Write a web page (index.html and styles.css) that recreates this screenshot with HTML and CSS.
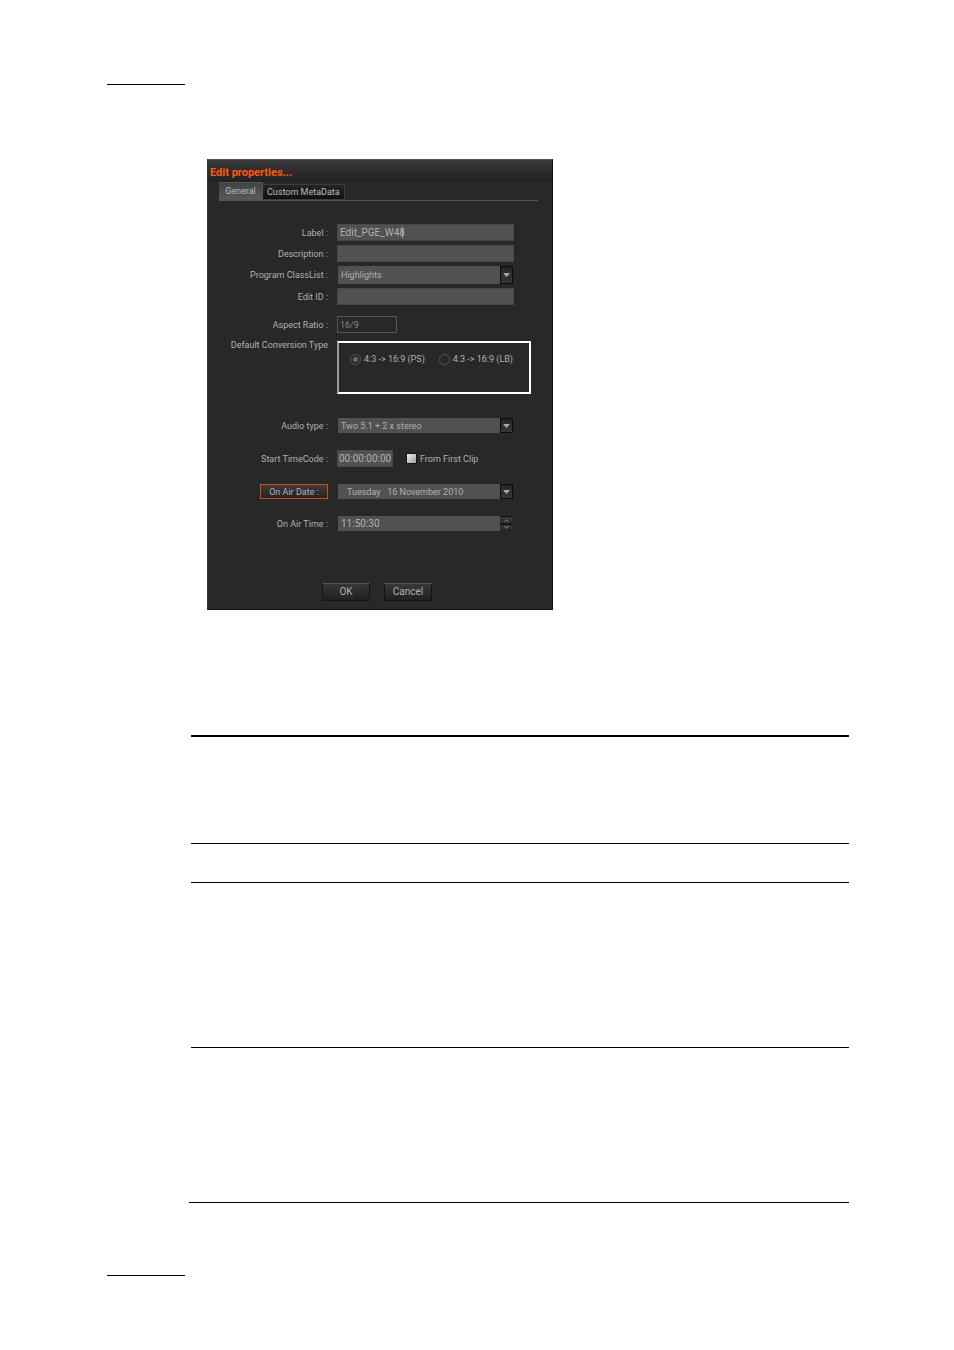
FILE: index.html
```html
<!DOCTYPE html>
<html lang="en">
<head>
    <meta charset="UTF-8">
    <meta name="viewport" content="width=device-width, initial-scale=1.0">
    <title>Edit properties</title>
    <link rel="stylesheet" href="styles.css">
</head>
<body>
    <hr class="mark">

    <main class="content">
        <form class="dialog" onsubmit="return false">
            <h1 class="title">Edit properties...</h1>

            <div class="tabs">
                <button type="button" class="tab active">General</button>
                <button type="button" class="tab">Custom MetaData</button>
            </div>

            <div class="fields">
                <div class="row">
                    <label for="label">Label :</label>
                    <div class="control">
                        <input class="box large" id="label" type="text" value="Edit_PGE_W48">
                        <span class="caret"></span>
                    </div>
                </div>
                <div class="row">
                    <label for="description">Description :</label>
                    <input class="box" id="description" type="text">
                </div>
                <div class="row">
                    <label for="classlist">Program ClassList :</label>
                    <div class="control combo tall">
                        <select id="classlist">
                            <option>Highlights</option>
                        </select>
                        <span class="arrow"><svg viewBox="0 0 7 4"><path d="M0 0h7L3.500 4z"/></svg></span>
                    </div>
                </div>
                <div class="row">
                    <label for="edit-id">Edit ID :</label>
                    <input class="box" id="edit-id" type="text">
                </div>
                <div class="row ratio">
                    <label for="ratio">Aspect Ratio :</label>
                    <input class="box outline" id="ratio" type="text" value="16/9" readonly>
                </div>
                <div class="row conversion">
                    <span class="name" id="conversion">Default Conversion Type</span>
                    <div class="group" role="radiogroup" aria-labelledby="conversion">
                        <label><input type="radio" name="conversion" checked>4:3 -&gt; 16:9 (PS)</label>
                        <label><input type="radio" name="conversion">4:3 -&gt; 16:9 (LB)</label>
                    </div>
                </div>
                <div class="row audio">
                    <label for="audio">Audio type :</label>
                    <div class="control combo">
                        <select id="audio">
                            <option>Two 5.1 + 2 x stereo</option>
                        </select>
                        <span class="arrow"><svg viewBox="0 0 7 4"><path d="M0 0h7L3.500 4z"/></svg></span>
                    </div>
                </div>
                <div class="row spaced">
                    <label for="timecode">Start TimeCode :</label>
                    <input class="box large timecode" id="timecode" type="text" value="00:00:00:00">
                    <label class="check"><input type="checkbox">From First Clip</label>
                </div>
                <div class="row spaced">
                    <div class="name"><button type="button" class="date-button" id="date-name">On Air Date :</button></div>
                    <div class="control combo">
                        <input class="date" type="text" value="Tuesday   16 November 2010" aria-labelledby="date-name">
                        <button type="button" class="arrow" aria-label="Open calendar"><svg viewBox="0 0 7 4"><path d="M0 0h7L3.500 4z"/></svg></button>
                    </div>
                </div>
                <div class="row spaced">
                    <label for="time">On Air Time :</label>
                    <div class="control combo">
                        <input class="large" id="time" type="text" value="11:50:30">
                        <div class="spin">
                            <button type="button" aria-label="Up"><svg viewBox="0 0 5 3"><path d="M0.500 3L2.500 0.500L4.500 3"/></svg></button>
                            <button type="button" aria-label="Down"><svg viewBox="0 0 5 3"><path d="M0.500 0L2.500 2.500L4.500 0"/></svg></button>
                        </div>
                    </div>
                </div>
            </div>

            <div class="actions">
                <button type="submit">OK</button>
                <button type="button">Cancel</button>
            </div>
        </form>

        <div class="sections">
            <section class="intro"></section>
            <section class="heading"></section>
            <section class="entry"></section>
            <section class="entry last"></section>
        </div>
    </main>

    <hr class="mark">
</body>
</html>
```
FILE: styles.css
```css
* {
    margin: 0;
    padding: 0;
    box-sizing: border-box;
}

body {
    background: #fff;
    padding: 84px 105px 74px 107px;
    font-family: Roboto, sans-serif;
    font-size: 9px;
    line-height: 12px;
    color: #b0b0b0;
}

input,
select,
button {
    appearance: none;
    border: none;
    border-radius: 0;
    outline: none;
    font: inherit;
    color: inherit;
    background: none;
}

.mark {
    width: 78px;
    border: none;
    border-top: 1px solid #000;
}

.content {
    padding: 74px 0 72px 84px;
}

/* dialog */

.dialog {
    width: 346px;
    max-width: 100%;
    margin-left: 16px;
    padding-bottom: 8px;
    background: #282828;
    border: 1px solid #111;
    border-top-color: #505050;
    border-left-color: #333;
}

.title {
    height: 22px;
    padding: 0 2px;
    font-size: 11px;
    line-height: 25px;
    font-weight: 700;
    color: #ff5a0a;
    background: linear-gradient(#3a3a3a, #202020);
}

.tabs {
    display: flex;
    align-items: flex-end;
    margin: 0 14px 0 11px;
    border-bottom: 1px solid #585858;
}

.tab {
    height: 16px;
    padding: 0 4px;
    white-space: nowrap;
    color: #bbb;
    background: linear-gradient(#252525, #101010);
    border: 1px solid #3c3c3c;
    border-left: none;
}

.tab.active {
    width: 44px;
    height: 18px;
    background: linear-gradient(#434343, #585858);
    border-color: #555;
}

.fields {
    display: flex;
    flex-direction: column;
    gap: 4px;
    padding: 23px 21px 0 8px;
}

.row {
    display: flex;
    align-items: center;
}

.row > label:first-child,
.name {
    width: 112px;
    margin-right: 9px;
    flex: none;
    text-align: right;
    white-space: nowrap;
}

.control {
    position: relative;
    width: 177px;
}

.box {
    width: 177px;
    height: 17px;
    padding: 0 2px;
    background: #515151;
    border: 1px solid #484848;
}

.large {
    font-size: 10px;
}

.control .box {
    display: block;
}

.caret {
    position: absolute;
    left: 65px;
    top: 3px;
    width: 1px;
    height: 11px;
    background: #aaa;
}

.combo {
    display: flex;
    height: 15px;
    padding: 0 1px;
}

.combo.tall {
    height: 18px;
}

.combo select,
.combo input {
    flex: 1;
    min-width: 0;
    padding: 0 3px;
    background: #515151;
}

.combo .date {
    padding-left: 9px;
    white-space: pre;
}

.arrow {
    display: flex;
    align-items: center;
    justify-content: center;
    width: 13px;
    background: linear-gradient(#242424, #363636);
    border: 1px solid #0c0c0c;
}

.arrow svg {
    width: 7px;
    height: 4px;
    fill: #aaa;
}

.ratio {
    margin-top: 7px;
}

.box.outline {
    width: 60px;
    color: #858585;
    background: none;
    border-color: #555;
}

.conversion {
    align-items: flex-start;
    margin-top: 4px;
}

.conversion .name {
    margin-top: -2px;
}

.group {
    display: flex;
    justify-content: space-between;
    flex: none;
    width: 194px;
    height: 53px;
    padding: 10px 16px 0 11px;
    border: 2px solid #fff;
    border-left-color: #999;
}

.group label {
    display: flex;
    align-items: center;
    gap: 3px;
    height: 12px;
    white-space: nowrap;
}

.group input {
    width: 11px;
    height: 11px;
    border: 1px solid #555;
    border-radius: 50%;
}

.group input:checked {
    background: radial-gradient(circle, #686868 2px, transparent 3px);
}

.audio {
    margin-top: 20px;
}

.spaced {
    margin-top: 13px;
}

.box.timecode {
    width: 56px;
    padding: 0 1px;
}

.check {
    display: flex;
    align-items: center;
    gap: 3px;
    margin-left: 13px;
    white-space: nowrap;
}

.check input {
    width: 11px;
    height: 11px;
    background: linear-gradient(135deg, #eee, #a0a0a0);
    border: 1px solid #151515;
}

.date-button {
    display: block;
    width: 68px;
    height: 15px;
    margin-left: auto;
    background: linear-gradient(#3d3d3d, #232323);
    border: 1px solid #c95010;
}

.spin {
    display: flex;
    flex-direction: column;
    width: 13px;
}

.spin button {
    display: flex;
    align-items: center;
    justify-content: center;
    flex: 1;
    min-height: 0;
    background: linear-gradient(#383838, #242424);
    border-top: 1px solid #0c0c0c;
}

.spin svg {
    width: 5px;
    height: 3px;
    fill: none;
    stroke: #888;
}

.actions {
    display: flex;
    justify-content: center;
    gap: 14px;
    margin-top: 52px;
    padding-right: 6px;
}

.actions button {
    width: 48px;
    height: 18px;
    font-size: 10px;
    background: linear-gradient(#373737, #202020);
    border: 1px solid #151515;
    border-top-color: #555;
}

/* ruled sections */

.sections {
    margin-top: 125px;
    border-top: 2px solid #000;
}

.sections section {
    border-bottom: 1px solid #000;
}

.intro {
    height: 107px;
}

.heading {
    height: 39px;
}

.entry {
    height: 165px;
}

.entry.last {
    height: 155px;
    margin-left: -2px;
}
```
